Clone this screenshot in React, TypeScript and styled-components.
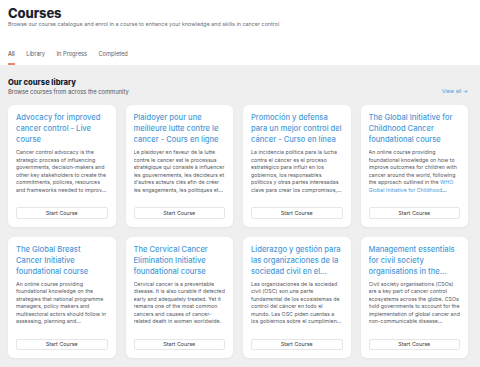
import React from "react";
import styled, { createGlobalStyle } from "styled-components";

const GlobalStyle = createGlobalStyle`
  html, body {
    margin: 0;
    padding: 0;
    height: 100%;
    background: #efefef;
  }
  body {
    font-family: Inter, "Noto Sans", sans-serif;
    -webkit-font-smoothing: antialiased;
  }
  #root {
    min-height: 100%;
    display: flex;
    flex-direction: column;
  }
`;

const Header = styled.header`
  background: #ffffff;
  padding: 5px 8px 0;
`;

const Title = styled.h1`
  margin: 0;
  font-size: 13px;
  line-height: 16px;
  font-weight: 800;
  color: #1c2330;
  letter-spacing: -0.1px;
`;

const Subtitle = styled.p`
  margin: 0;
  font-size: 5.4px;
  line-height: 7px;
  color: #6b6f76;
`;

const Tabs = styled.nav`
  display: flex;
  gap: 11.5px;
  margin-top: 22px;
`;

const Tab = styled.span<{ $active?: boolean }>`
  font-size: 5.7px;
  line-height: 8px;
  padding-bottom: 4.5px;
  color: ${(p) => (p.$active ? "#2a2f38" : "#5c6068")};
  border-bottom: 2px solid ${(p) => (p.$active ? "#e8866a" : "transparent")};
`;

const Library = styled.main`
  flex: 1;
  background: #efefef;
  padding: 13px 12px 12px 8px;
`;

const LibraryHead = styled.div`
  display: flex;
  justify-content: space-between;
  align-items: flex-end;
`;

const SectionTitle = styled.h2`
  margin: 0;
  font-size: 7.6px;
  line-height: 10px;
  font-weight: 800;
  color: #0f1b30;
`;

const SectionSub = styled.p`
  margin: 0.5px 0 0;
  font-size: 5.8px;
  line-height: 8px;
  color: #4f535a;
`;

const ViewAll = styled.a`
  font-size: 5.4px;
  line-height: 8px;
  color: #4b9ad8;
  text-decoration: none;
  padding-bottom: 1px;
`;

const Grid = styled.div`
  display: grid;
  grid-template-columns: repeat(4, 1fr);
  gap: 10px;
  margin-top: 9px;
`;

const Card = styled.article`
  background: #ffffff;
  border-radius: 6px;
  padding: 7px 8px 8px;
  box-shadow: 0 1px 3px rgba(0, 0, 0, 0.05);
  display: flex;
  flex-direction: column;
`;

const CardTitle = styled.h3`
  margin: 0;
  font-size: 7.6px;
  line-height: 11px;
  font-weight: 500;
  color: #4b9ad8;
  max-height: 33px;
  display: -webkit-box;
  -webkit-line-clamp: 3;
  -webkit-box-orient: vertical;
  overflow: hidden;
`;

const CardText = styled.p`
  margin: 4px 0 0;
  font-size: 5.3px;
  line-height: 7.5px;
  color: #55585e;
  max-height: 45px;
  display: -webkit-box;
  -webkit-line-clamp: 6;
  -webkit-box-orient: vertical;
  overflow: hidden;
`;

const Link = styled.span`
  color: #4b9ad8;
`;

const StartButton = styled.button`
  margin-top: auto;
  height: 11.5px;
  padding: 0;
  background: #ffffff;
  border: 1px solid #e6e6e6;
  border-radius: 2px;
  font-family: inherit;
  font-size: 5.4px;
  color: #3a3d42;
  cursor: pointer;
`;

const CardBody = styled.div`
  height: 88px;
  margin-bottom: 7px;
`;

type Course = {
  title: string;
  text: string;
  link?: string;
};

const courses: Course[] = [
  {
    title: "Advocacy for improved cancer control - Live course",
    text: "Cancer control advocacy is the strategic process of influencing governments, decision-makers and other key stakeholders to create the commitments, policies, resources and frameworks needed to improve cancer control.",
  },
  {
    title: "Plaidoyer pour une meilleure lutte contre le cancer - Cours en ligne",
    text: "Le plaidoyer en faveur de la lutte contre le cancer est le processus stratégique qui consiste à influencer les gouvernements, les décideurs et d'autres acteurs clés afin de créer les engagements, les politiques et les ressources.",
  },
  {
    title: "Promoción y defensa para un mejor control del cáncer - Curso en línea",
    text: "La incidencia política para la lucha contra el cáncer es el proceso estratégico para influir en los gobiernos, los responsables políticos y otras partes interesadas clave para crear los compromisos, las políticas y los recursos.",
  },
  {
    title: "The Global Initiative for Childhood Cancer foundational course",
    text: "An online course providing foundational knowledge on how to improve outcomes for children with cancer around the world, following the approach outlined in the ",
    link: "WHO Global Initiative for Childhood Cancer",
  },
  {
    title: "The Global Breast Cancer Initiative foundational course",
    text: "An online course providing foundational knowledge on the strategies that national programme managers, policy makers and multisectoral actors should follow in assessing, planning and implementing breast cancer programmes.",
  },
  {
    title: "The Cervical Cancer Elimination Initiative foundational course",
    text: "Cervical cancer is a preventable disease. It is also curable if detected early and adequately treated. Yet it remains one of the most common cancers and causes of cancer-related death in women worldwide.",
  },
  {
    title: "Liderazgo y gestión para las organizaciones de la sociedad civil en el control del cáncer",
    text: "Las organizaciones de la sociedad civil (OSC) son una parte fundamental de los ecosistemas de control del cáncer en todo el mundo. Las OSC piden cuentas a los gobiernos sobre el cumplimiento de sus compromisos.",
  },
  {
    title: "Management essentials for civil society organisations in the cancer control space",
    text: "Civil society organisations (CSOs) are a key part of cancer control ecosystems across the globe. CSOs hold governments to account for the implementation of global cancer and non-communicable disease commitments.",
  },
];

export default function App() {
  return (
    <>
      <GlobalStyle />
      <Header>
        <Title>Courses</Title>
        <Subtitle>
          Browse our course catalogue and enrol in a course to enhance your knowledge and skills in cancer control
        </Subtitle>
        <Tabs>
          <Tab $active>All</Tab>
          <Tab>Library</Tab>
          <Tab>In Progress</Tab>
          <Tab>Completed</Tab>
        </Tabs>
      </Header>
      <Library>
        <LibraryHead>
          <div>
            <SectionTitle>Our course library</SectionTitle>
            <SectionSub>Browse courses from across the community</SectionSub>
          </div>
          <ViewAll href="#">View all →</ViewAll>
        </LibraryHead>
        <Grid>
          {courses.map((c) => (
            <Card key={c.title}>
              <CardBody>
                <CardTitle>{c.title}</CardTitle>
                <CardText>
                  {c.text}
                  {c.link ? <Link>{c.link}</Link> : null}
                </CardText>
              </CardBody>
              <StartButton>Start Course</StartButton>
            </Card>
          ))}
        </Grid>
      </Library>
    </>
  );
}
